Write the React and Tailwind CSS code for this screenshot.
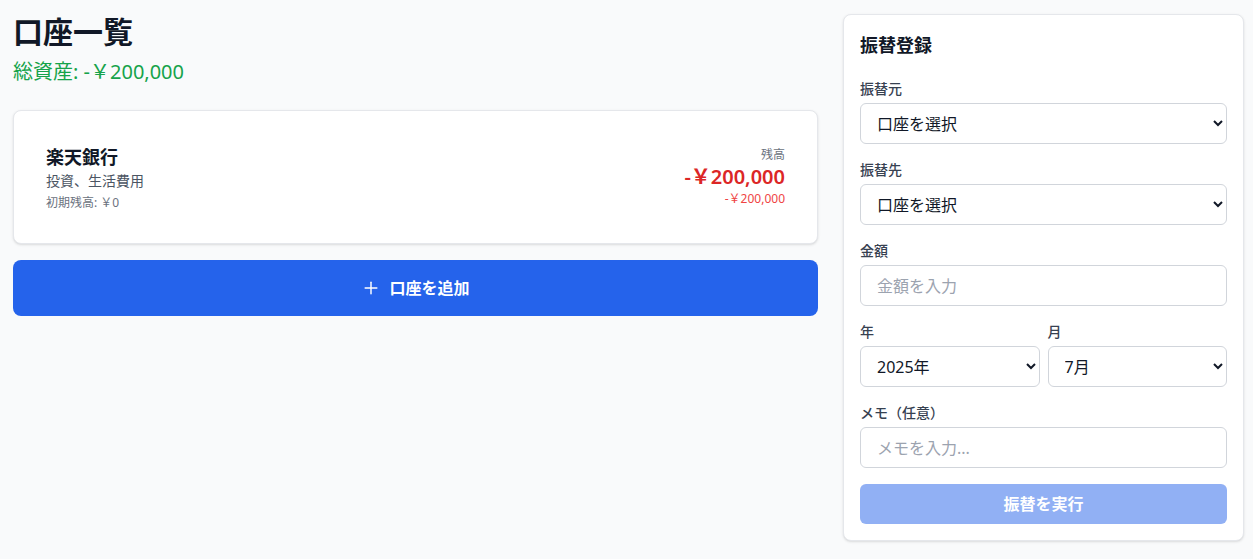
import React, { useState } from 'react';
import { Plus } from 'lucide-react';

const accounts = [
  {
    id: 1,
    name: '楽天銀行',
    purpose: '投資、生活費用',
    initial: '￥0',
    balance: '-￥200,000',
    change: '-￥200,000',
  },
];

const years = [2023, 2024, 2025, 2026];
const months = [1, 2, 3, 4, 5, 6, 7, 8, 9, 10, 11, 12];

const fieldBase =
  'w-full h-[41px] border border-[#d1d5db] rounded-md bg-white text-[#111827] text-base focus:outline-none focus:ring-2 focus:ring-[#3b82f6]';
const selectClass = `${fieldBase} pl-3 pr-2`;
const inputClass = `${fieldBase} px-4 placeholder:text-[#9ca3af]`;

const TransferForm = () => {
  const [from, setFrom] = useState('');
  const [to, setTo] = useState('');
  const [amount, setAmount] = useState('');
  const [year, setYear] = useState(2025);
  const [month, setMonth] = useState(7);
  const [memo, setMemo] = useState('');

  const disabled = !from || !to || !amount;

  return (
    <div className="w-[401px] shrink-0 bg-white rounded-lg border border-[#e5e7eb] shadow-sm p-4">
      <h2 className="text-lg font-semibold text-[#111827] mb-5">振替登録</h2>
      <div className="space-y-4">
        <div>
          <label className="block text-sm font-medium text-[#374151] mb-1">振替元</label>
          <select value={from} onChange={(e) => setFrom(e.target.value)} className={selectClass}>
            <option value="">口座を選択</option>
            {accounts.map((a) => (
              <option key={a.id} value={a.id}>{a.name}</option>
            ))}
          </select>
        </div>
        <div>
          <label className="block text-sm font-medium text-[#374151] mb-1">振替先</label>
          <select value={to} onChange={(e) => setTo(e.target.value)} className={selectClass}>
            <option value="">口座を選択</option>
            {accounts.map((a) => (
              <option key={a.id} value={a.id}>{a.name}</option>
            ))}
          </select>
        </div>
        <div>
          <label className="block text-sm font-medium text-[#374151] mb-1">金額</label>
          <input
            type="number"
            value={amount}
            onChange={(e) => setAmount(e.target.value)}
            placeholder="金額を入力"
            className={inputClass}
          />
        </div>
        <div className="grid grid-cols-2 gap-2">
          <div>
            <label className="block text-sm font-medium text-[#374151] mb-1">年</label>
            <select value={year} onChange={(e) => setYear(Number(e.target.value))} className={selectClass}>
              {years.map((y) => (
                <option key={y} value={y}>{y}年</option>
              ))}
            </select>
          </div>
          <div>
            <label className="block text-sm font-medium text-[#374151] mb-1">月</label>
            <select value={month} onChange={(e) => setMonth(Number(e.target.value))} className={selectClass}>
              {months.map((m) => (
                <option key={m} value={m}>{m}月</option>
              ))}
            </select>
          </div>
        </div>
        <div>
          <label className="block text-sm font-medium text-[#374151] mb-1">メモ（任意）</label>
          <input
            type="text"
            value={memo}
            onChange={(e) => setMemo(e.target.value)}
            placeholder="メモを入力..."
            className={inputClass}
          />
        </div>
        <button
          disabled={disabled}
          className="w-full h-10 rounded-md bg-[#2563eb] text-white font-semibold disabled:opacity-50"
        >
          振替を実行
        </button>
      </div>
    </div>
  );
};

export default function App() {
  return (
    <div className="min-h-screen bg-[#f9fafb] font-['Noto_Sans','Noto_Sans_CJK_JP',sans-serif]">
      <div className="flex gap-[25px] pt-[14px] pl-[13px] pr-[9px] pb-4">
        {/* Accounts */}
        <div className="flex-1 min-w-0">
          <h1 className="text-3xl font-bold text-[#111827]">口座一覧</h1>
          <p className="mt-2 text-xl text-[#16a34a]">総資産: -￥200,000</p>

          <div className="mt-6 space-y-4">
            {accounts.map((a) => (
              <div key={a.id} className="bg-white rounded-lg border border-[#e5e7eb] shadow-sm p-8">
                <div className="flex justify-between items-center">
                  <div>
                    <h3 className="text-lg font-semibold text-[#111827]">{a.name}</h3>
                    <p className="text-sm text-[#4b5563]">{a.purpose}</p>
                    <p className="mt-1 text-xs text-[#6b7280]">初期残高: {a.initial}</p>
                  </div>
                  <div className="text-right">
                    <p className="text-xs text-[#6b7280]">残高</p>
                    <p className="text-xl font-semibold text-[#dc2626]">{a.balance}</p>
                    <p className="text-xs text-[#ef4444]">{a.change}</p>
                  </div>
                </div>
              </div>
            ))}
          </div>

          <button className="mt-4 w-full h-14 flex items-center justify-center gap-2 bg-[#2563eb] text-white font-semibold rounded-lg hover:bg-[#1d4ed8]">
            <Plus size={20} strokeWidth={1.75} />
            <span>口座を追加</span>
          </button>
        </div>

        <TransferForm />
      </div>
    </div>
  );
}
